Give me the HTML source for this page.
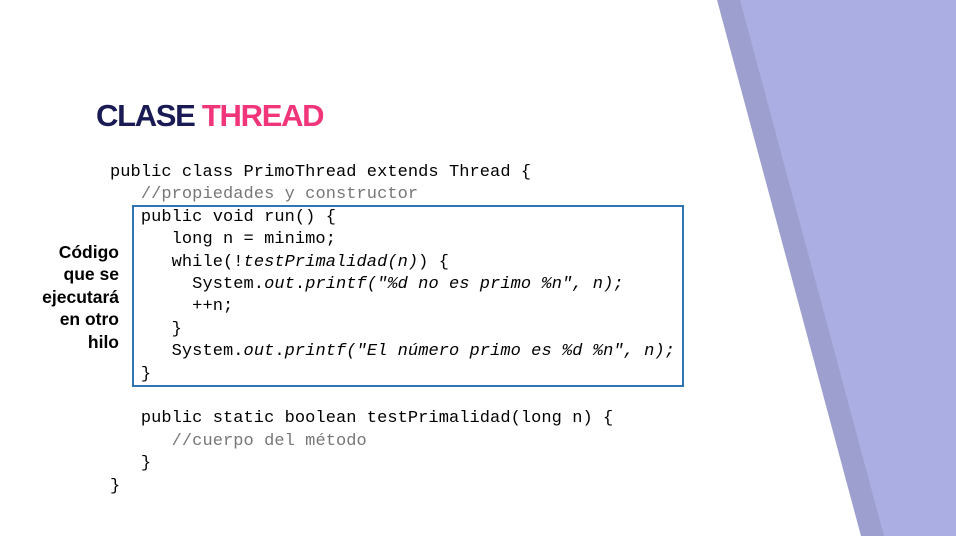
<!DOCTYPE html>
<html><head><meta charset="utf-8"><style>
body{margin:0;width:956px;height:536px;background:#fff;position:relative;overflow:hidden;font-family:"Liberation Sans",sans-serif}
.title{position:absolute;left:96px;top:98px;font-size:31px;font-weight:bold;letter-spacing:-1.3px;color:#1a1a54}
.title span{color:#f0357a}
.code{position:absolute;left:110px;top:162px;font-family:"Liberation Mono",monospace;font-size:17px;letter-spacing:0.07px;line-height:22.4px;white-space:pre;color:#000}
.c{color:#777}
i{font-style:italic}
.box{position:absolute;left:132px;top:205px;width:548px;height:178px;border:2px solid #2e75b6}
.lab{position:absolute;right:837px;top:241px;text-align:right;font-weight:bold;font-size:17.5px;line-height:22.4px;letter-spacing:0px}
</style></head><body>
<svg width="956" height="536" style="position:absolute;left:0;top:0">
<polygon points="717,0 956,0 956,536 861,536" fill="#9d9fce"/>
<polygon points="740,0 956,0 956,536 884,536" fill="#abaee3"/>
</svg>
<div class="title">CLASE <span>THREAD</span></div>
<div class="box"></div>
<div class="lab">Código<br>que se<br>ejecutará<br>en otro<br>hilo</div>
<div class="code">public class PrimoThread extends Thread {
   <span class="c">//propiedades y constructor</span>
   public void run() {
      long n = minimo;
      while(!<i>testPrimalidad(n)</i>) {
        System.<i>out</i>.<i>printf("%d no es primo %n", n);</i>
        ++n;
      }
      System.<i>out</i>.<i>printf("El número primo es %d %n", n);</i>
   }

   public static boolean testPrimalidad(long n) {
      <span class="c">//cuerpo del método</span>
   }
}</div>
</body></html>
